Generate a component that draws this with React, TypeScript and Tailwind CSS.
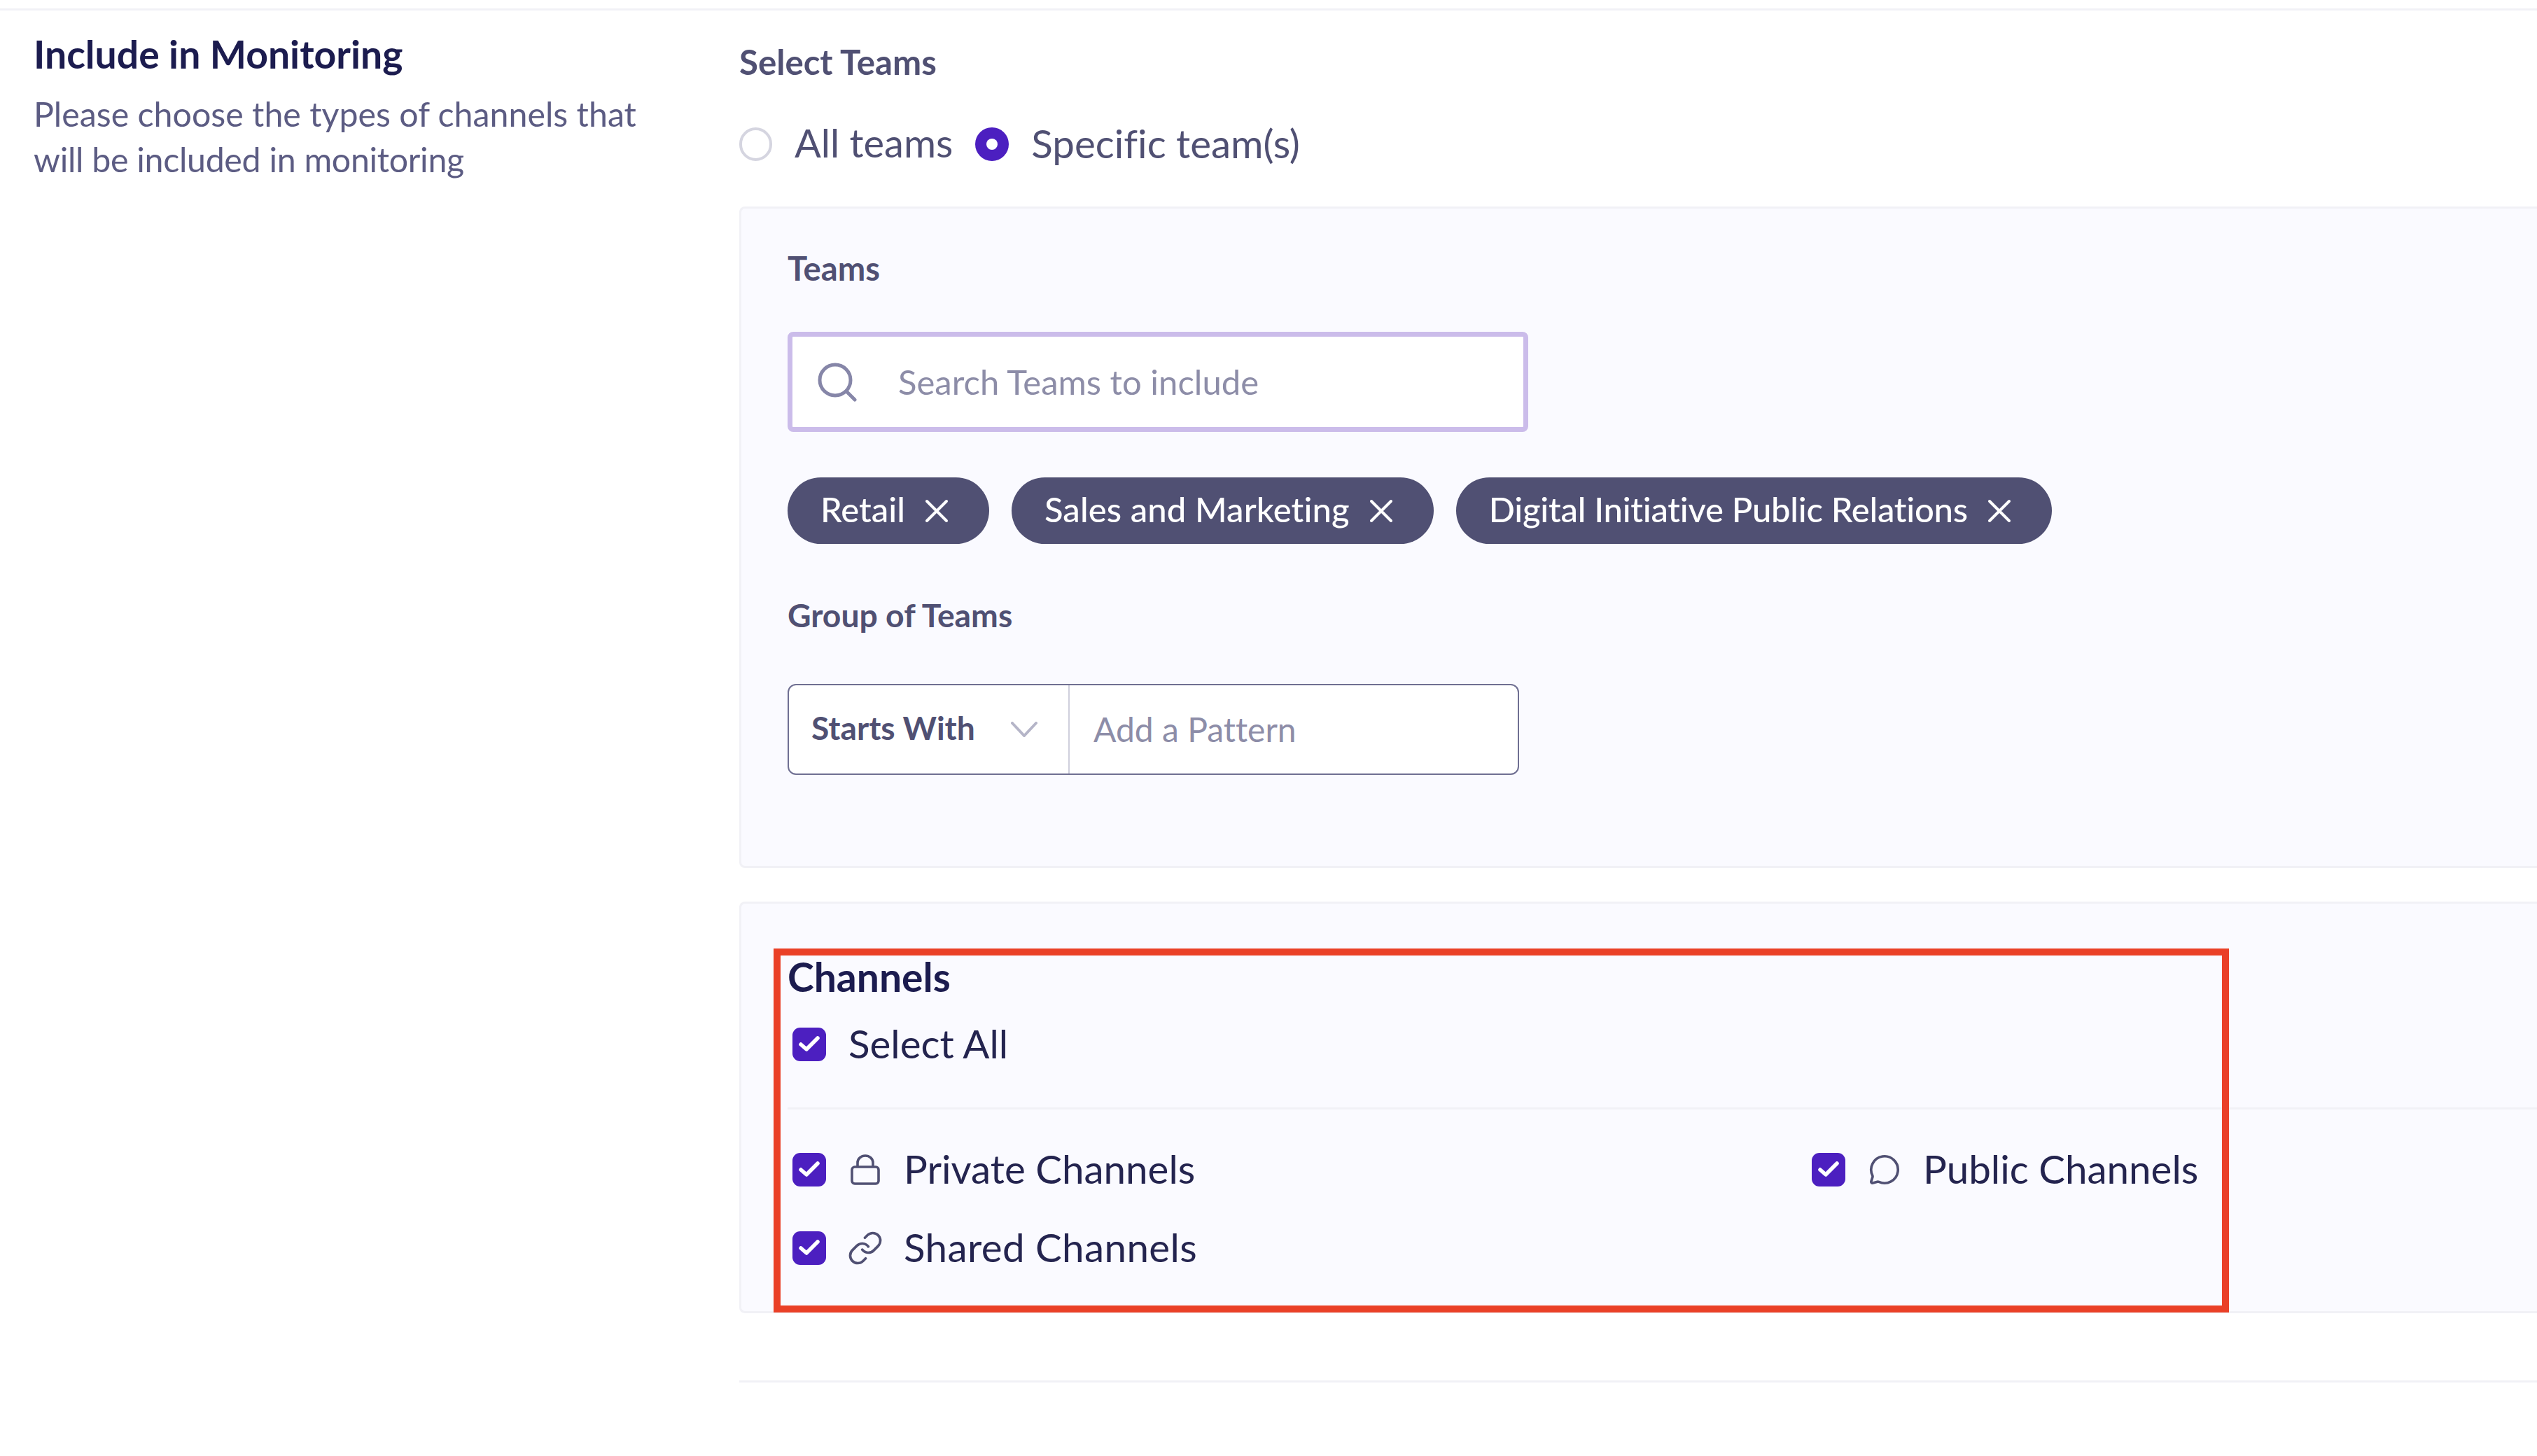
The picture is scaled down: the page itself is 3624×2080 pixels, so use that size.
import { Link, MessageCircle } from "lucide-react";

const font = "font-['Lato','Liberation_Sans',sans-serif] [font-variant-ligatures:none]";

function Checkbox() {
  return (
    <span className="flex h-12 w-12 shrink-0 items-center justify-center rounded-[11px] bg-[#4c1fc0]">
      <svg width="48" height="48" viewBox="0 0 48 48" fill="none">
        <path d="M12 24l8 7L36 15" stroke="#fff" strokeWidth="5.5" strokeLinecap="round" strokeLinejoin="round" />
      </svg>
    </span>
  );
}

function LockIcon() {
  return (
    <svg width="42" height="44" viewBox="0 0 42 44" fill="none" stroke="#505073" strokeWidth="3.6">
      <rect x="2" y="18" width="38" height="24" rx="4" />
      <path d="M10 18v-6a11 10 0 0 1 22 0v6" />
    </svg>
  );
}

function SearchIcon() {
  return (
    <svg width="56" height="56" viewBox="0 0 56 56" fill="none" stroke="#8686a8" strokeWidth="5" strokeLinecap="round">
      <circle cx="25" cy="25" r="22" />
      <path d="M41 41l12 12" />
    </svg>
  );
}

function CloseIcon() {
  return (
    <svg width="34" height="34" viewBox="0 0 34 34" fill="none" stroke="#fff" strokeWidth="4" strokeLinecap="round">
      <path d="M3 3l28 28M31 3L3 31" />
    </svg>
  );
}

function Chip({ label, tracking = "" }: { label: string; tracking?: string }) {
  return (
    <span className="flex h-[95px] items-center gap-7 rounded-[48px] bg-[#505073] pl-[47px] pr-[58px] text-[49px] font-medium text-white">
      <span className={`pb-1 ${tracking}`}>{label}</span>
      <CloseIcon />
    </span>
  );
}

function Option({ label, icon, tracking = "" }: { label: string; icon: React.ReactNode; tracking?: string }) {
  return (
    <div className="flex h-12 items-center">
      <Checkbox />
      <span className="ml-[34px] flex w-11 justify-center text-[#505073]">{icon}</span>
      <span className={`ml-[33px] pb-1 text-[56.5px] text-[#24244f] ${tracking}`}>{label}</span>
    </div>
  );
}

export default function App() {
  return (
    <div className={`${font} relative h-[2080px] w-[3624px] overflow-hidden bg-white`}>
      <div className="h-[15px] border-b-[3px] border-[#f1f1f6]" />

      <div className="flex">
        {/* Left column */}
        <div className="w-[1056px] shrink-0 pl-12 pt-[34px]">
          <h2 className="text-[55.3px] leading-[56px] font-bold text-[#1c1c4f]">Include in Monitoring</h2>
          <p className="mt-[25px] w-[900px] text-[48.3px] leading-[65px] text-[#5c5c83]">
            Please choose the types of channels that
            <br />
            <span className="tracking-[-0.3px]">will be included in monitoring</span>
          </p>
        </div>

        {/* Right column */}
        <div className="flex-1">
          <div className="pt-[48px] text-[49.2px] leading-[50px] font-bold text-[#505073]">Select Teams</div>

          <div className="mt-[69px] flex h-12 items-center text-[56.5px] text-[#505073]">
            <span className="h-12 w-[47px] rounded-full border-4 border-[#d5d5e0] bg-white" />
            <span className="ml-8 pb-1 text-[56px]">All teams</span>
            <span className="ml-8 flex h-12 w-12 items-center justify-center rounded-full bg-[#4c1fc0]">
              <span className="h-4 w-4 rounded-full bg-white" />
            </span>
            <span className="ml-8 pb-1">Specific team(s)</span>
          </div>

          {/* Teams panel */}
          <div className="mt-[65px] h-[945px] rounded-l-lg border-[3px] border-r-0 border-[#f1f1f6] bg-[#fafaff] pl-[66px] pt-[60px]">
            <div className="text-[47.2px] leading-[50px] font-bold text-[#505073]">Teams</div>
            <div className="mt-[66px] flex h-[143px] w-[1058px] items-center rounded-lg border-[7px] border-[#cbbcea] bg-white pl-[36px]">
              <SearchIcon />
              <span className="ml-[59px] text-[49px] text-[#8d8da8]">Search Teams to include</span>
            </div>
            <div className="mt-[65px] flex gap-8">
              <Chip label="Retail" />
              <Chip label="Sales and Marketing" tracking="tracking-[0.12px]" />
              <Chip label="Digital Initiative Public Relations" tracking="tracking-[-0.26px]" />
            </div>
            <div className="mt-[76px] text-[46.3px] leading-[50px] font-bold text-[#505073]">Group of Teams</div>
            <div className="mt-[74px] flex h-[130px] w-[1045px] rounded-xl border-2 border-[#6f6f92] bg-white">
              <div className="flex w-[401px] items-center justify-between border-r-2 border-[#cfcfdc] pl-8 pr-[44px]">
                <span className="pb-1 text-[46.2px] font-bold text-[#505073]">Starts With</span>
                <svg width="38" height="22" viewBox="0 0 38 22" fill="none" stroke="#b5b5c8" strokeWidth="4" strokeLinecap="round">
                  <path d="M2 2l17 18L36 2" />
                </svg>
              </div>
              <div className="flex items-center pl-[34px] text-[48px] text-[#8d8da8]">Add a Pattern</div>
            </div>
          </div>

          {/* Channels panel */}
          <div className="mt-12 h-[588px] rounded-l-lg border-[3px] border-r-0 border-[#f1f1f6] bg-[#fafaff] pl-[66px] pt-[69px]">
            <div className="text-[57px] leading-[70px] font-bold text-[#1c1c4f]">Channels</div>
            <div className="mt-[38px] flex h-12 items-center pl-[7px]">
              <Checkbox />
              <span className="ml-8 pb-1 text-[56.5px] text-[#24244f]">Select All</span>
            </div>
            <div className="mt-[66px] h-[3px] bg-[#f1f1f6]" />
            <div className="mt-[62px] grid grid-cols-[1456px_1fr] gap-y-16 pl-[7px]">
              <Option label="Private Channels" icon={<LockIcon />} />
              <Option label="Public Channels" icon={<MessageCircle size={46} strokeWidth={1.9} className="shrink-0" />} />
              <Option label="Shared Channels" tracking="tracking-[0.4px]" icon={<Link size={52} strokeWidth={1.7} className="shrink-0" />} />
            </div>
          </div>

          <div className="mt-[96px] h-[3px] bg-[#f1f1f6]" />
        </div>
      </div>

      {/* Red annotation */}
      <div className="absolute left-[1105px] top-[1355px] h-[520px] w-[2079px] border-[10px] border-[#ea4027]" />
    </div>
  );
}
